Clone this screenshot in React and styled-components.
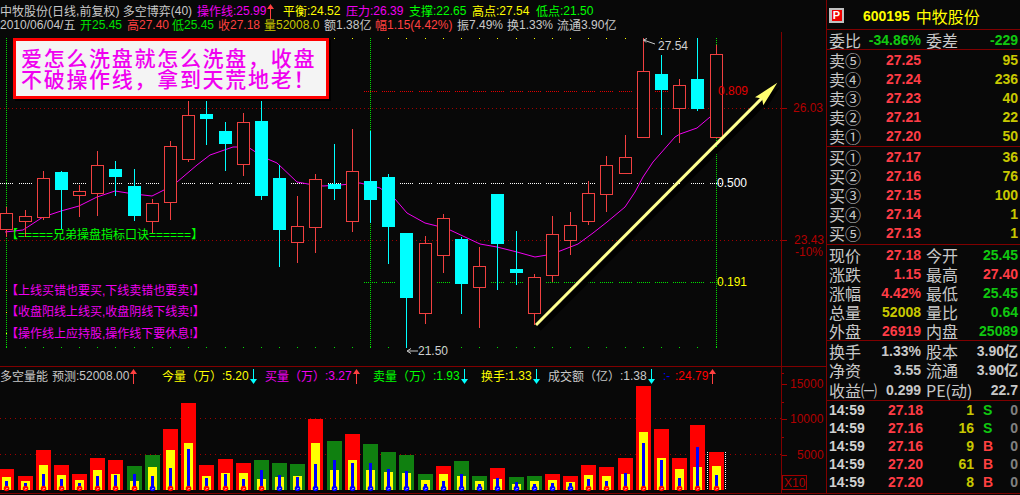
import React from 'react';
import styled, { createGlobalStyle } from 'styled-components';

const CJK = '"Noto Sans CJK SC", "Liberation Sans", sans-serif';
const SANS = '"Liberation Sans", "Noto Sans CJK SC", sans-serif';
const BG = '#080808';
const LINE = '#800000';
const RED = '#ff3c46';
const DIM_YELLOW = '#c8c800';
const GREEN = '#10c810';
const GREY = '#c8c8c8';

const Global = createGlobalStyle`
  html, body { margin: 0; padding: 0; background: ${BG}; overflow: hidden; }
  #root { width: 1020px; height: 495px; }
`;

const Page = styled.div`
  display: flex;
  width: 1020px;
  height: 495px;
  background: ${BG};
  overflow: hidden;
`;
const Main = styled.div`
  display: flex;
  flex-direction: column;
  width: 826px;
  height: 494px;
  border-bottom: 1px solid ${LINE};
  box-sizing: border-box;
`;
const Header = styled.div`
  display: flex;
  flex-direction: column;
  height: 32px;
  padding-top: 4px;
  box-sizing: border-box;
`;
const InfoRow = styled.div`
  display: flex;
  height: 14px;
  align-items: center;
`;
const Item = styled.div`
  display: flex;
  align-items: center;
  flex: 0 0 ${p => p.$w}px;
  height: 14px;
  white-space: pre;
  font: 12px/14px ${CJK};
  color: ${p => p.$c || GREY};
`;
const Lat = styled.span`
  font-family: ${SANS};
`;
const Mixed = ({ text }) =>
  text.split(/([\u0000-\u00ff]+)/).filter(Boolean).map((s, i) =>
    /^[\u0000-\u00ff]+$/.test(s) ? <Lat key={i}>{s}</Lat> : <span key={i}>{s}</span>
  );

const ArrowBox = styled.svg`
  flex: none;
  margin-left: 1px;
`;
const Arrow = ({ up }) => (
  <ArrowBox width="7" height="15" viewBox="0 0 7 15">
    {up ? (
      <>
        <path d="M3.5 4V15" stroke="#ff4040" strokeWidth="1" />
        <path d="M3.5 0L7 5H0Z" fill="#ff4040" />
      </>
    ) : (
      <>
        <path d="M3.5 0V11" stroke="#00ffff" strokeWidth="1" />
        <path d="M3.5 15L7 10H0Z" fill="#00ffff" />
      </>
    )}
  </ArrowBox>
);

const ChartRow = styled.div`
  display: flex;
  height: ${p => p.$h}px;
  flex: none;
`;
const Plot = styled.div`
  position: relative;
  flex: 0 0 781px;
  height: 100%;
  display: flex;
  flex-direction: column;
`;
const AxisSvg = styled.svg`
  display: block;
  flex: none;
  border-left: 1px solid ${LINE};
  width: 44px;
  height: 100%;
`;
const Canvas = styled.svg`
  display: block;
  flex: none;
  shape-rendering: crispEdges;
`;
const VolumeRow = styled.div`
  flex: none;
  display: flex;
  border-top: 1px solid ${LINE};
  height: 127px;
  box-sizing: content-box;
`;
const IndicatorBar = styled.div`
  display: flex;
  height: 17px;
  flex: none;
  align-items: center;
  padding-top: 1px;
  box-sizing: border-box;
`;
const Banner = styled.div`
  position: absolute;
  left: 13px;
  top: 6px;
  width: 316px;
  height: 61px;
  box-sizing: border-box;
  border: 3px solid #ff0000;
  background: #f4f4f4;
  box-shadow: 2px 2px 0 #000;
  padding: 6px 0 0 5px;
  font: 500 21px/21px ${CJK};
  letter-spacing: 1.7px;
  color: #f000f0;
  white-space: nowrap;
`;
const Legend = styled.div`
  position: absolute;
  left: 6px;
  top: ${p => p.$top}px;
  font: 12px/14px ${CJK};
  color: ${p => p.$c};
  white-space: pre;
`;

const Panel = styled.aside`
  flex: 0 0 194px;
  width: 194px;
  height: 494px;
  box-sizing: border-box;
  border-left: 1px solid ${LINE};
  border-bottom: 1px solid ${LINE};
  display: flex;
  flex-direction: column;
`;
const Section = styled.div`
  flex: none;
  height: ${p => p.$h}px;
  box-sizing: content-box;
  border-bottom: ${p => (p.$last ? 'none' : `1px solid ${LINE}`)};
  display: grid;
  grid-auto-rows: ${p => p.$row}px;
`;
const TitleRow = styled.div`
  display: flex;
  align-items: center;
  height: 29px;
  padding: 2px 0 0 2px;
  box-sizing: border-box;
  color: #ffff00;
`;
const Badge = styled.div`
  width: 15px;
  height: 15px;
  background: #c0c0c0;
  display: flex;
  align-items: center;
  justify-content: center;
  margin-right: 19px;
`;
const BadgeInner = styled.div`
  width: 10px;
  height: 11px;
  background: #f00000;
  color: #fff;
  font: 700 11px/11px ${SANS};
  text-align: center;
`;
const Code = styled.span`
  font: 700 14px/1 ${SANS};
  margin-right: 6px;
`;
const Name = styled.span`
  font: 16px/1 ${CJK};
`;
const Row = styled.div`
  display: grid;
  grid-template-columns: 92px 92px;
  column-gap: 5px;
  padding: 0 2px;
  align-items: center;
`;
const Cell = styled.div`
  display: flex;
  justify-content: space-between;
  align-items: center;
  white-space: nowrap;
`;
const Label = styled.span`
  font: 16px/16px ${CJK};
  color: ${GREY};
`;
const Value = styled.span`
  font: 700 14px/16px ${SANS};
  color: ${p => p.$c || GREY};
`;
const TickRowBox = styled.div`
  display: grid;
  grid-template-columns: 59px 35px 51px 31px 13px;
  padding-left: 2px;
  align-items: center;
  font: 700 14px/16px ${SANS};
`;
const TickCell = styled.span`
  color: ${p => p.$c};
  text-align: ${p => p.$a || 'left'};
  padding-left: ${p => p.$pl || 0}px;
`;

const CANDLES = [
  [6, 213, 229, 207, 237, 'r'], [25, 216, 221, 210, 237, 'r'], [43, 178, 217, 171, 220, 'r'],
  [61, 172, 190, 171, 230, 'c'], [79, 191, 195, 185, 217, 'r'], [97, 165, 193, 151, 216, 'r'],
  [115, 169, 177, 161, 196, 'c'], [134, 186, 216, 169, 221, 'c'], [152, 203, 221, 199, 233, 'r'],
  [170, 146, 202, 141, 220, 'r'], [188, 115, 159, 90, 162, 'r'], [206, 114, 119, 90, 145, 'c'],
  [225, 131, 144, 122, 171, 'c'], [243, 122, 164, 113, 176, 'r'], [261, 121, 196, 90, 200, 'c'],
  [279, 178, 230, 165, 267, 'c'], [297, 226, 242, 196, 263, 'r'], [315, 179, 227, 174, 253, 'r'],
  [334, 184, 189, 144, 200, 'c'], [352, 171, 221, 129, 232, 'r'], [370, 181, 200, 131, 223, 'c'],
  [388, 177, 227, 174, 264, 'c'], [406, 233, 298, 233, 348, 'c'], [425, 243, 313, 236, 324, 'r'],
  [443, 218, 255, 214, 273, 'r'], [461, 239, 284, 237, 314, 'c'], [479, 266, 287, 247, 328, 'r'],
  [497, 194, 244, 194, 290, 'c'], [516, 269, 273, 231, 285, 'c'], [534, 277, 313, 274, 325, 'r'],
  [552, 234, 275, 216, 282, 'r'], [570, 225, 240, 212, 255, 'r'], [588, 193, 221, 181, 225, 'r'],
  [606, 165, 194, 156, 212, 'r'], [625, 157, 173, 135, 173, 'r'], [643, 71, 137, 38, 138, 'r'],
  [661, 74, 90, 55, 135, 'c'], [679, 85, 108, 79, 143, 'r'], [697, 79, 109, 38, 111, 'c'],
  [716, 54, 137, 45, 137, 'r'],
];
const MA = '5,232 23,230 43,217 61,211 79,206 97,197 115,191 134,194 152,196 170,187 177,182 197,165 210,155 233,147 248,147 263,157 277,163 297,182 308,184 323,186 340,185 360,183 380,188 395,199 407,213 425,223 437,226 450,230 480,244 497,247 517,252 535,257 547,255 560,251 578,244 593,233 607,222 625,207 635,192 643,177 653,162 675,137 680,134 697,128 710,117';

const VOLS = [
  [6,'r',327,351,363,'r'],[25,'r',348,363,369,'r'],[43,'r',270,315,342,'r'],[61,'r',315,345,357,'r'],
  [79,'r',342,360,369,'r'],[97,'r',294,330,348,'r'],[115,'r',300,342,345,'r'],[134,'g',318,363,342,'r'],
  [152,'g',285,321,348,'b'],[170,'r',207,270,324,'r'],[188,'r',129,249,267,'r'],[206,'r',315,348,354,'r'],
  [225,'r',297,339,342,'r'],[243,'r',309,339,357,'r'],[261,'g',300,357,330,'r'],[279,'g',309,351,345,'b'],
  [297,'g',312,348,351,'b'],[315,'r',177,249,312,'b'],[334,'g',243,330,300,'b'],[352,'r',222,300,309,'b'],
  [370,'g',252,330,309,'b'],[388,'g',276,336,327,'b'],[406,'g',285,339,333,'b'],[425,'g',342,360,372,'b'],
  [443,'r',318,342,363,'b'],[461,'g',303,348,342,'b'],[479,'g',348,363,372,'b'],[497,'r',324,357,354,'b'],
  [516,'g',351,372,366,'b'],[534,'g',348,363,372,'b'],[552,'r',342,360,369,'b'],[570,'r',348,366,369,'b'],
  [588,'r',315,345,357,'r'],[606,'r',321,348,363,'r'],[625,'r',294,342,339,'r'],[643,'r',78,216,249,'r'],
  [661,'r',207,294,300,'r'],[679,'r',294,327,354,'r'],[697,'r',195,321,261,'r'],[716,'r',276,318,345,'r'],
];

const svgTextProps = { fontFamily: SANS, fontSize: 12, dominantBaseline: 'central' };

const PriceCanvas = () => (
  <Canvas width="781" height="334" viewBox="0 32 781 334">
    <path d="M0 108.5H781M0 240.5H781" stroke="#a00000" strokeDasharray="1 3" />
    {CANDLES.map(([c], i) => (
      <g key={c}>
        <path d={`M${c - 6} 183.5H${c + 7}`} stroke="#ffffff" strokeDasharray="1 1" />
        {i >= 20 && <path d={`M${c - 6} 91.5H${c + 7}`} stroke="#e00000" strokeDasharray="1 1" />}
        {i >= 20 && <path d={`M${c - 6} 282.5H${c + 7}`} stroke="#00e000" strokeDasharray="1 1" />}
        <rect x={c} y="38" width="1" height="1" fill="#ffff00" />
        <rect x={c} y="347" width="1" height="1" fill="#00e000" />
      </g>
    ))}
    <path d="M6.5 38V348M370.5 38V348M716.5 38V348" stroke="#00e000" strokeDasharray="1 1" />
    <rect x="6" y="290" width="1" height="1" fill="#ffff00" />
    <rect x="6" y="312" width="1" height="1" fill="#ffff00" />
    <rect x="6" y="333" width="1" height="1" fill="#ffff00" />
    <polyline points={MA} fill="none" stroke="#f000f0" strokeWidth="1" shapeRendering="auto" />
    {CANDLES.map(([c, t, b, wt, wb, k]) => {
      const col = k === 'r' ? '#f04040' : '#00ffff';
      return (
        <g key={c}>
          <path d={`M${c + 0.5} ${wt}V${wb}`} stroke={col} />
          {k === 'r' ? (
            <rect x={c - 5.5} y={t + 0.5} width="12" height={b - t} fill={BG} stroke={col} />
          ) : (
            <rect x={c - 6} y={t} width="13" height={b - t} fill={col} />
          )}
        </g>
      );
    })}
    <g shapeRendering="auto">
      <path d="M539 329L768 99" stroke="#000" strokeWidth="5" />
      <path d="M758 101L780 87L766 109Z" fill="#000" />
      <path d="M536 325L765 95" stroke="#ffff90" strokeWidth="3" />
      <path d="M777.3 82.7L755 97.3L762 98.5L763.3 105.3Z" fill="#ffff70" />
      <path d="M643.5 40L655 44" stroke="#c8c8c8" />
      <path d="M647 38.5L643.5 40L646 42.5" stroke="#c8c8c8" fill="none" />
      <path d="M408 351H418M411 348.5L407 351L411 353.5" stroke="#c8c8c8" fill="none" />
    </g>
    <text x="658" y="46" fill="#d0d0d0" {...svgTextProps}>27.54</text>
    <text x="418" y="351" fill="#d0d0d0" {...svgTextProps}>21.50</text>
    <text x="718" y="91" fill="#e00000" {...svgTextProps}>0.809</text>
    <text x="717" y="183" fill="#ffffff" {...svgTextProps}>0.500</text>
    <text x="717" y="282" fill="#ffff00" {...svgTextProps}>0.191</text>
  </Canvas>
);

const PriceAxis = () => (
  <AxisSvg viewBox="782 32 44 334">
    <path d="M782 108.5H787M782 240.5H787" stroke="#a00000" />
    <text x="793" y="108" fill="#b00000" {...svgTextProps}>26.03</text>
    <text x="794" y="240" fill="#b00000" {...svgTextProps}>23.43</text>
    <text x="795" y="252" fill="#b00000" {...svgTextProps}>-10%</text>
  </AxisSvg>
);

const VolumeCanvas = () => (
  <Canvas width="781" height="109" viewBox="0 384 781 109">
    <path d="M0 418.5H781M0 454.5H781" stroke="#a00000" strokeDasharray="1 4" />
    {VOLS.map(([c, k, o, y, b, d]) => {
      const oy = 360 + Math.round(o / 3);
      const yy = 360 + Math.round(y / 3);
      const by = 360 + Math.round(b / 3);
      return (
        <g key={c}>
          <rect x={c - 7} y={oy} width="15" height={490 - oy} fill={k === 'r' ? '#ff0000' : '#108010'} />
          <rect x={c - 4} y={yy} width="9" height={490 - yy} fill="#ffff00" />
          <rect x={c - 1} y={by} width="3" height={490 - by} fill="#0000ff" />
          <g shapeRendering="auto">
            <circle cx={c + 0.5} cy="488.5" r="2.8" fill={d === 'r' ? '#ff0000' : '#0000ff'} />
            <path d={`M${c} 489.5l1.5 -1.5`} stroke="#fff" />
          </g>
        </g>
      );
    })}
    <path d="M707.5 452V490M725.5 452V490" stroke="#fff" strokeDasharray="1 1" />
  </Canvas>
);

const VolumeAxis = () => (
  <AxisSvg viewBox="782 366 44 127">
    <path d="M782 383.5H787M782 418.5H787M782 454.5H787M782 401.5H784M782 436.5H784M782 372.5H784" stroke="#a00000" />
    <text x="790" y="383" fill="#b00000" {...svgTextProps}>15000</text>
    <text x="790" y="418" fill="#b00000" {...svgTextProps}>10000</text>
    <text x="797" y="454" fill="#b00000" {...svgTextProps}>5000</text>
    <rect x="782.5" y="474.5" width="24" height="14" fill="none" stroke="#a00000" />
    <text x="784" y="482" fill="#b00000" {...svgTextProps}>X10</text>
  </AxisSvg>
);

const ROW1 = [
  [197, GREY, '中牧股份(日线,前复权) 多空博弈(40)'],
  [86, '#f000f0', '操作线:25.99', true],
  [63, '#ffff00', '平衡:24.52'],
  [63, '#f000f0', '压力:26.39'],
  [63, '#00ff00', '支撑:22.65'],
  [64, '#ffff00', '高点:27.54'],
  [80, '#00ff00', '低点:21.50'],
];
const ROW2 = [
  [80, GREY, '2010/06/04/五'],
  [47, '#00e000', '开25.45'],
  [45, '#ff4040', '高27.40'],
  [46, '#00e000', '低25.45'],
  [46, '#ff4040', '收27.18'],
  [60, DIM_YELLOW, '量52008.0'],
  [51, GREY, '额1.38亿'],
  [82, '#ff4040', '幅1.15(4.42%)'],
  [50, GREY, '振7.49%'],
  [50, GREY, '换1.33%'],
  [70, GREY, '流通3.90亿'],
];
const INDICATORS = [
  [52, GREY, '多空量能'],
  [110, GREY, '预测:52008.00', 'up'],
  [103, '#ffff00', '今量（万）:5.20', 'down'],
  [108, '#f000f0', '买量（万）:3.27', 'up'],
  [108, '#00ff00', '卖量（万）:1.93', 'down'],
  [67, '#ffff00', '换手:1.33', 'down'],
  [115, GREY, '成交额（亿）:1.38', 'down'],
  [12, '#0000ff', ':-'],
  [60, '#ff0000', ':24.79', 'up'],
];

const SELL = [['卖⑤','27.25','95'],['卖④','27.24','236'],['卖③','27.23','40'],['卖②','27.21','22'],['卖①','27.20','50']];
const BUY = [['买①','27.17','36'],['买②','27.16','76'],['买③','27.15','100'],['买④','27.14','1'],['买⑤','27.13','1']];
const QUOTES = [
  ['现价','27.18',RED,'今开','25.45',GREEN],
  ['涨跌','1.15',RED,'最高','27.40',RED],
  ['涨幅','4.42%',RED,'最低','25.45',GREEN],
  ['总量','52008',DIM_YELLOW,'量比','0.64',GREEN],
  ['外盘','26919',RED,'内盘','25089',GREEN],
];
const STATS = [
  ['换手','1.33%','股本','3.90亿'],
  ['净资','3.55','流通','3.90亿'],
  ['收益㈠','0.299','PE(动)','22.7'],
];
const TICKS = [
  ['27.18','1','S'],['27.16','16','S'],['27.16','9','B'],['27.20','61','B'],['27.20','8','B'],
];

const BookRow = ({ label, price, vol }) => (
  <Row>
    <Cell><Label>{label}</Label><Value $c={RED}>{price}</Value></Cell>
    <Cell><span /><Value $c={DIM_YELLOW}>{vol}</Value></Cell>
  </Row>
);

export default function App() {
  return (
    <Page>
      <Global />
      <Main>
        <Header>
          <InfoRow>
            {ROW1.map(([w, c, t, arrow]) => (
              <Item key={t} $w={w} $c={c}>
                <Mixed text={t} />
                {arrow && <Arrow up />}
              </Item>
            ))}
          </InfoRow>
          <InfoRow>
            {ROW2.map(([w, c, t]) => (
              <Item key={t} $w={w} $c={c}><Mixed text={t} /></Item>
            ))}
          </InfoRow>
        </Header>
        <ChartRow $h={334}>
          <Plot>
            <PriceCanvas />
            <Banner>爱怎么洗盘就怎么洗盘，收盘<br />不破操作线，拿到天荒地老！</Banner>
            <Legend $top={195} $c="#00ff00"><Mixed text="【=====兄弟操盘指标口诀======】" /></Legend>
            <Legend $top={251} $c="#f000f0"><Mixed text="【上线买错也要买,下线卖错也要卖!】" /></Legend>
            <Legend $top={272} $c="#f000f0"><Mixed text="【收盘阳线上线买,收盘阴线下线卖!】" /></Legend>
            <Legend $top={294} $c="#f000f0"><Mixed text="【操作线上应持股,操作线下要休息!】" /></Legend>
          </Plot>
          <PriceAxis />
        </ChartRow>
        <VolumeRow>
          <Plot>
            <IndicatorBar>
              {INDICATORS.map(([w, c, t, a]) => (
                <Item key={t} $w={w} $c={c}>
                  <Mixed text={t} />
                  {a && <Arrow up={a === 'up'} />}
                </Item>
              ))}
            </IndicatorBar>
            <VolumeCanvas />
          </Plot>
          <VolumeAxis />
        </VolumeRow>
      </Main>
      <Panel>
        <Section $h={29}>
          <TitleRow>
            <Badge><BadgeInner>P</BadgeInner></Badge>
            <Code>600195</Code>
            <Name>中牧股份</Name>
          </TitleRow>
        </Section>
        <Section $h={19} $row={19}>
          <Row>
            <Cell><Label>委比</Label><Value $c={GREEN}>-34.86%</Value></Cell>
            <Cell><Label>委差</Label><Value $c={GREEN}>-229</Value></Cell>
          </Row>
        </Section>
        <Section $h={96} $row={19}>
          {SELL.map(([l, p, v]) => <BookRow key={l} label={l} price={p} vol={v} />)}
        </Section>
        <Section $h={97} $row={19}>
          {BUY.map(([l, p, v]) => <BookRow key={l} label={l} price={p} vol={v} />)}
        </Section>
        <Section $h={95} $row={19}>
          {QUOTES.map(([a, b, bc, c, d, dc]) => (
            <Row key={a}>
              <Cell><Label>{a}</Label><Value $c={bc}>{b}</Value></Cell>
              <Cell><Label>{c}</Label><Value $c={dc}>{d}</Value></Cell>
            </Row>
          ))}
        </Section>
        <Section $h={59} $row={19.5}>
          {STATS.map(([a, b, c, d]) => (
            <Row key={a}>
              <Cell><Label>{a}</Label><Value>{b}</Value></Cell>
              <Cell><Label>{c}</Label><Value>{d}</Value></Cell>
            </Row>
          ))}
        </Section>
        <Section $h={90} $row={18} $last>
          {TICKS.map(([p, v, s], i) => (
            <TickRowBox key={i}>
              <TickCell $c="#d0d0d0">14:59</TickCell>
              <TickCell $c={RED}>{p}</TickCell>
              <TickCell $c={DIM_YELLOW} $a="right">{v}</TickCell>
              <TickCell $c={s === 'S' ? GREEN : '#ff4040'} $pl={9}>{s}</TickCell>
              <TickCell $c="#808080" $a="right">0</TickCell>
            </TickRowBox>
          ))}
        </Section>
      </Panel>
    </Page>
  );
}
